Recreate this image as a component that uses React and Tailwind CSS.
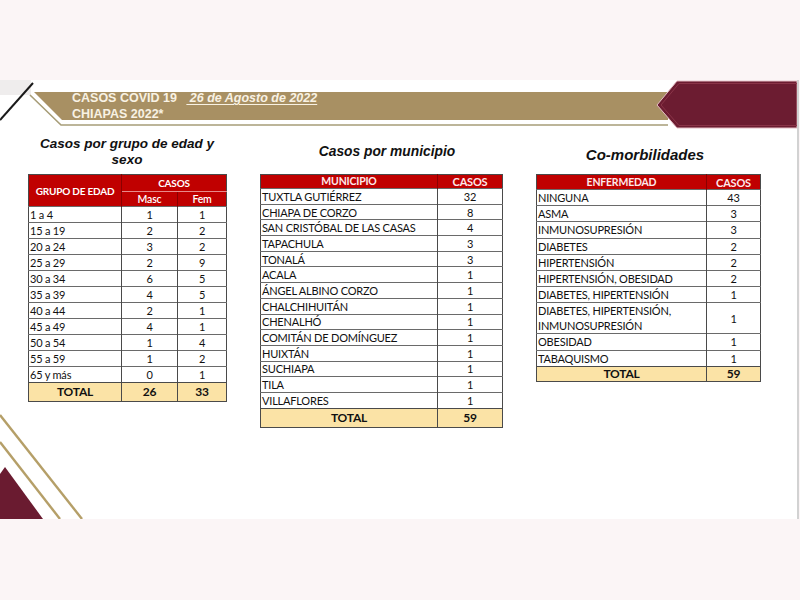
import React from "react";

const edad = [
  ["1 a 4", 1, 1],
  ["15 a 19", 2, 2],
  ["20 a 24", 3, 2],
  ["25 a 29", 2, 9],
  ["30 a 34", 6, 5],
  ["35 a 39", 4, 5],
  ["40 a 44", 2, 1],
  ["45 a 49", 4, 1],
  ["50 a 54", 1, 4],
  ["55 a 59", 1, 2],
  ["65 y más", 0, 1],
];

const muni = [
  ["TUXTLA GUTIÉRREZ", 32],
  ["CHIAPA DE CORZO", 8],
  ["SAN CRISTÓBAL DE LAS CASAS", 4],
  ["TAPACHULA", 3],
  ["TONALÁ", 3],
  ["ACALA", 1],
  ["ÁNGEL ALBINO CORZO", 1],
  ["CHALCHIHUITÁN", 1],
  ["CHENALHÓ", 1],
  ["COMITÁN DE DOMÍNGUEZ", 1],
  ["HUIXTÁN", 1],
  ["SUCHIAPA", 1],
  ["TILA", 1],
  ["VILLAFLORES", 1],
];

const comor = [
  ["NINGUNA", 43],
  ["ASMA", 3],
  ["INMUNOSUPRESIÓN", 3],
  ["DIABETES", 2],
  ["HIPERTENSIÓN", 2],
  ["HIPERTENSIÓN, OBESIDAD", 2],
  ["DIABETES, HIPERTENSIÓN", 1],
  ["DIABETES, HIPERTENSIÓN,\nINMUNOSUPRESIÓN", 1, true],
  ["OBESIDAD", 1],
  ["TABAQUISMO", 1],
];

function Decor() {
  return (
    <svg
      className="absolute left-0 top-0 pointer-events-none"
      width="797"
      height="439"
      viewBox="0 0 797 439"
    >
      <rect x="0" y="0" width="31" height="15" fill="#efeded" />
      <line x1="33" y1="3" x2="0" y2="40" stroke="#1a1a1a" strokeWidth="2" />
      <polygon points="34,12 668,12 668,40 62,40" fill="#a89063" />
      <polyline
        points="30,15 61,45 668,45"
        fill="none"
        stroke="#a79d78"
        strokeWidth="1.6"
      />
      <polygon
        points="677,1 797,1 797,48 677,48 657,25"
        fill="#6c1c31"
        stroke="#e4bcc4"
        strokeWidth="1"
      />
      <polygon
        points="679,3.5 797,3.5 797,45.5 679,45.5 661,25"
        fill="none"
        stroke="#8a3448"
        strokeWidth="1"
      />
      <polygon points="0,394 5,387 43,439 0,439" fill="#6a1b30" />
      <line x1="0" y1="335" x2="82" y2="439" stroke="#b59f68" strokeWidth="2.4" />
      <line x1="0" y1="362" x2="60" y2="439" stroke="#b59f68" strokeWidth="2.4" />
    </svg>
  );
}

const tableFont =
  "font-['Lato',sans-serif] text-[11px] tracking-[-0.2px] leading-none text-[#111]";
const titleFont =
  "font-['Liberation_Sans',Arial,sans-serif] font-bold italic text-[#111]";

function Edad() {
  return (
    <table className={`w-[198px] table-fixed border-collapse border border-[#4a4a4a] ${tableFont}`}>
      <colgroup>
        <col className="w-[93px]" />
        <col className="w-[56px]" />
        <col className="w-[49px]" />
      </colgroup>
      <thead>
        <tr className="bg-[#c00000] text-white">
          <th
            rowSpan={2}
            className="border-r border-[#8a0000] font-bold text-[10px] tracking-[-0.2px]"
          >
            GRUPO DE EDAD
          </th>
          <th colSpan={2} className="h-[17px] border-b border-[#e88a8a] font-bold text-[10px]">
            CASOS
          </th>
        </tr>
        <tr className="bg-[#c00000] text-white">
          <th className="h-[15px] border-r border-[#8a0000] font-semibold text-[10.5px]">Masc</th>
          <th className="font-semibold text-[10.5px]">Fem</th>
        </tr>
      </thead>
      <tbody>
        {edad.map(([g, m, f]) => (
          <tr key={g} className="border-t border-[#6a6a6a]">
            <td className="h-[16px] pl-[1px] border-r border-[#4a4a4a]">{g}</td>
            <td className="text-center border-r border-[#4a4a4a]">{m}</td>
            <td className="text-center">{f}</td>
          </tr>
        ))}
        <tr className="bg-[#fbe3a6] border-t border-[#4a4a4a] font-bold text-[12px]">
          <td className="h-[19px] text-center border-r border-[#4a4a4a]">TOTAL</td>
          <td className="text-center border-r border-[#4a4a4a]">26</td>
          <td className="text-center">33</td>
        </tr>
      </tbody>
    </table>
  );
}

function Muni() {
  return (
    <table className={`w-[242px] table-fixed border-collapse border border-[#4a4a4a] ${tableFont}`}>
      <colgroup>
        <col className="w-[177px]" />
        <col className="w-[65px]" />
      </colgroup>
      <thead>
        <tr className="bg-[#c00000] text-[#fde8ea]">
          <th className="h-[14px] border-r border-[#8a0000] font-bold text-[10.5px]">MUNICIPIO</th>
          <th className="font-bold text-[11px]">CASOS</th>
        </tr>
      </thead>
      <tbody>
        {muni.map(([n, c]) => (
          <tr key={n} className="border-t border-[#6a6a6a]">
            <td className="h-[15.7px] pl-[1px] border-r border-[#4a4a4a] whitespace-nowrap">{n}</td>
            <td className="text-center">{c}</td>
          </tr>
        ))}
        <tr className="bg-[#fbe3a6] border-t border-[#4a4a4a] font-bold text-[12px]">
          <td className="h-[19px] text-center border-r border-[#4a4a4a]">TOTAL</td>
          <td className="text-center">59</td>
        </tr>
      </tbody>
    </table>
  );
}

function Comor() {
  return (
    <table className={`w-[224px] table-fixed border-collapse border border-[#4a4a4a] ${tableFont}`}>
      <colgroup>
        <col className="w-[170px]" />
        <col className="w-[54px]" />
      </colgroup>
      <thead>
        <tr className="bg-[#c00000] text-[#fde8ea]">
          <th className="h-[15px] border-r border-[#8a0000] font-bold text-[10.5px]">ENFERMEDAD</th>
          <th className="font-bold text-[11px]">CASOS</th>
        </tr>
      </thead>
      <tbody>
        {comor.map(([n, c, tall]) => (
          <tr key={n} className="border-t border-[#6a6a6a]">
            <td
              className={`${tall ? "h-[30px] leading-[15px]" : "h-[16.2px]"} pl-[1px] border-r border-[#4a4a4a] whitespace-pre-line`}
            >
              {n}
            </td>
            <td className="text-center">{c}</td>
          </tr>
        ))}
        <tr className="bg-[#fbe3a6] border-t border-[#4a4a4a] font-bold text-[12px]">
          <td className="h-[15px] text-center border-r border-[#4a4a4a]">TOTAL</td>
          <td className="text-center">59</td>
        </tr>
      </tbody>
    </table>
  );
}

export default function App() {
  return (
    <div className="w-[800px] h-[600px] bg-[#fbf5f6] pt-[80px] overflow-hidden">
      <div className="relative w-[799px] h-[439px] bg-white border-r-2 border-[#d2d2d2]">
        <Decor />
        <div className="relative h-[50px] pl-[72px] pt-[11px] font-['Liberation_Sans',Arial,sans-serif] font-bold text-[12.5px] leading-[15.5px] text-[#f8f2e4]">
          <div>
            CASOS COVID 19{" "}
            <span className="italic underline underline-offset-[2px] ml-[6px]">
              {"\u00a026 de Agosto de 2022"}
            </span>
          </div>
          <div>CHIAPAS 2022*</div>
        </div>
        <div className="relative flex items-start gap-[34px] pl-[28px]">
          <div className="flex flex-col w-[198px]">
            <div className={`h-[44px] flex items-center justify-center text-center text-[13.5px] leading-[16px] ${titleFont}`}>
              <div>
                Casos por grupo de edad y
                <br />
                sexo
              </div>
            </div>
            <Edad />
          </div>
          <div className="flex flex-col w-[242px]">
            <div className={`h-[44px] flex items-center justify-center text-[13.8px] pl-[12px] ${titleFont}`}>
              Casos por municipio
            </div>
            <Muni />
          </div>
          <div className="flex flex-col w-[224px]">
            <div className={`h-[44px] flex items-center justify-center pt-[6px] pr-[6px] text-[15px] ${titleFont}`}>
              Co-morbilidades
            </div>
            <Comor />
          </div>
        </div>
      </div>
    </div>
  );
}
